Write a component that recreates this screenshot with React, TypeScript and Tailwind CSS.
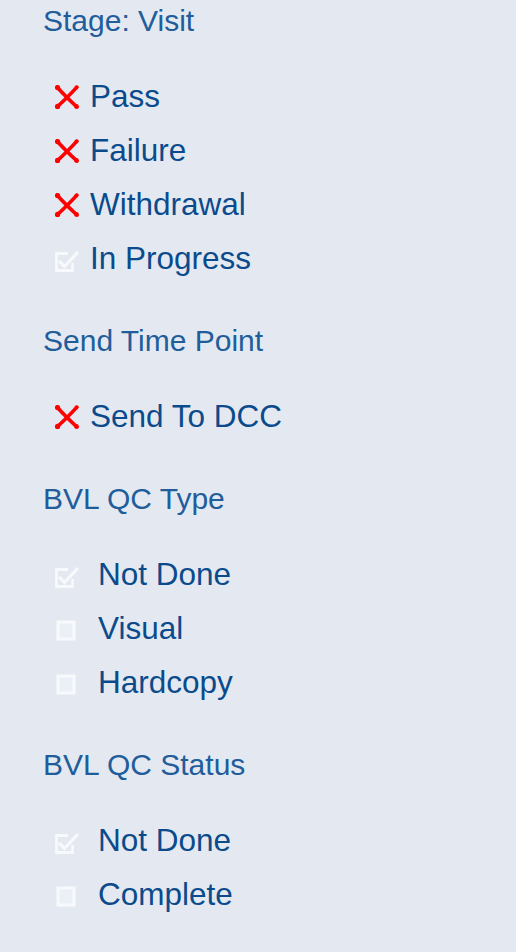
import React from "react";

const XIcon = () => (
  <svg width="26" height="26" viewBox="0 0 26 26" className="shrink-0">
    <path d="M3 3 Q11 12 23 23" stroke="#ff0000" strokeWidth="3.6" strokeLinecap="round" fill="none" />
    <path d="M23 3 Q15 12 3 23" stroke="#ff0000" strokeWidth="3.4" strokeLinecap="round" fill="none" />
    <circle cx="3.6" cy="3.6" r="2.6" fill="#ff0000" />
    <circle cx="3.6" cy="22.4" r="2.6" fill="#ff0000" />
    <circle cx="22.4" cy="22.4" r="2.4" fill="#ff0000" />
    <circle cx="22.4" cy="3.6" r="2" fill="#ff0000" />
  </svg>
);

const CheckIcon = () => (
  <svg width="26" height="26" viewBox="0 0 26 26" className="shrink-0">
    <path d="M14 7.5 H2.5 V24.5 H18.5 V17" stroke="#f7f9fc" strokeWidth="2.8" fill="none" />
    <path d="M5 15 L10.5 20.5 L24 6" stroke="#f7f9fc" strokeWidth="3.2" fill="none" strokeLinejoin="miter" />
  </svg>
);

const BoxIcon = () => (
  <svg width="26" height="26" viewBox="0 0 26 26" className="shrink-0">
    <rect x="4" y="6" width="16" height="17" fill="#ebeff6" stroke="#f7f9fc" strokeWidth="3" />
  </svg>
);

type Kind = "x" | "check" | "box";

const Item = ({ kind, label, wide }: { kind: Kind; label: string; wide?: boolean }) => (
  <div className="flex h-[54px] items-center">
    <div className="ml-[11px] flex w-[26px] justify-center">
      {kind === "x" ? <XIcon /> : kind === "check" ? <CheckIcon /> : <BoxIcon />}
    </div>
    <span className={`${wide ? "ml-[18px]" : "ml-[10px]"} text-[31.5px] leading-none text-[#0b4b8c]`}>{label}</span>
  </div>
);

const Header = ({ children }: { children: React.ReactNode }) => (
  <div className="flex h-[42px] items-center text-[30px] leading-none text-[#215d9b]">{children}</div>
);

const Group = ({
  title,
  items,
  wide,
  first,
}: {
  title: string;
  items: { kind: Kind; label: string }[];
  wide?: boolean;
  first?: boolean;
}) => (
  <div className={first ? "" : "mt-[34px]"}>
    <Header>{title}</Header>
    <div className="mt-[28px] flex flex-col">
      {items.map((it, i) => (
        <Item key={i} kind={it.kind} label={it.label} wide={wide} />
      ))}
    </div>
  </div>
);

export default function App() {
  return (
    <div
      className="min-h-[952px] w-[516px] bg-[#e4e9f1] pl-[43px]"
      style={{ fontFamily: '"Liberation Sans", Arial, sans-serif' }}
    >
      <Group
        first
        title="Stage: Visit"
        items={[
          { kind: "x", label: "Pass" },
          { kind: "x", label: "Failure" },
          { kind: "x", label: "Withdrawal" },
          { kind: "check", label: "In Progress" },
        ]}
      />
      <Group title="Send Time Point" items={[{ kind: "x", label: "Send To DCC" }]} />
      <Group
        wide
        title="BVL QC Type"
        items={[
          { kind: "check", label: "Not Done" },
          { kind: "box", label: "Visual" },
          { kind: "box", label: "Hardcopy" },
        ]}
      />
      <Group
        wide
        title="BVL QC Status"
        items={[
          { kind: "check", label: "Not Done" },
          { kind: "box", label: "Complete" },
        ]}
      />
    </div>
  );
}
